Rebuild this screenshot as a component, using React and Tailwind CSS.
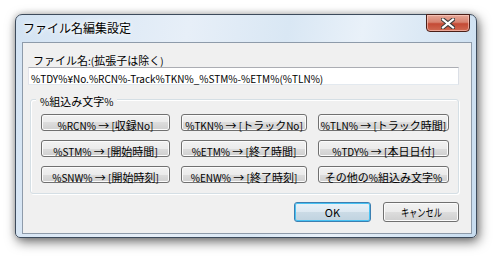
import React from "react";

const rows = [
  ["%RCN% → [収録No]", "%TKN% → [トラックNo]", "%TLN% → [トラック時間]"],
  ["%STM% → [開始時間]", "%ETM% → [終了時間]", "%TDY% → [本日日付]"],
  ["%SNW% → [開始時刻]", "%ENW% → [終了時刻]", "その他の%組込み文字%"],
];
const widths = ["w-[129px]", "w-[126px]", "w-[131px]"];

function T({ children }) {
  const parts = String(children).split(/([\x20-\x7E¥]+)/).filter((p) => p.length);
  return (
    <span className="whitespace-pre">
      {parts.map((p, i) =>
        /^[\x20-\x7E¥]+$/.test(p) ? (
          <span key={i} className="text-[10px]">
            {p}
          </span>
        ) : (
          <span key={i} className="text-[11px]">
            {p}
          </span>
        )
      )}
    </span>
  );
}

function Btn({ children, className = "" }) {
  return (
    <div
      className={
        "flex items-center justify-center rounded-[3px] border border-[#707070] bg-[linear-gradient(to_bottom,#f2f2f2_0%,#ebebeb_50%,#dddddd_50%,#cfcfcf_100%)] shadow-[inset_0_0_0_1px_#fbfbfb] leading-none text-black whitespace-nowrap " +
        className
      }
    >
      {children}
    </div>
  );
}

export default function App() {
  return (
    <div className="w-[495px] h-[257px] bg-white pt-[14px] pl-[15px] font-['Noto_Sans_CJK_JP',sans-serif] overflow-hidden">
      <div className="w-[462px] h-[224px] rounded-t-[7px] rounded-b-[5px] border border-[#3d4b5c] bg-[linear-gradient(100deg,#d3e3f3_0%,#e7eff8_35%,#d9e7f4_55%,#e9f1f9_70%,#c7dcef_100%)] shadow-[2px_4px_12px_rgba(0,0,0,0.55),0_0_6px_rgba(0,0,0,0.2)] flex flex-col">
        <div className="h-[27px] flex items-start justify-between pl-[7px] pr-[6px]">
          <div className="pt-[6px] text-[12px] leading-[14px] text-black [text-shadow:0_0_4px_#ffffff,0_0_6px_#ffffff]">
            ファイル名編集設定
          </div>
          <div className="w-[44px] h-[18px] -mt-px rounded-b-[4px] border border-[#4a1f18] bg-[linear-gradient(to_bottom,#e7a898_0%,#d7826f_45%,#c44a35_55%,#d06a52_100%)] shadow-[inset_0_0_0_1px_rgba(255,210,200,0.6)] flex items-center justify-center">
            <svg width="14" height="11" viewBox="0 0 14 11">
              <path d="M2 1.5 L12 9.5 M12 1.5 L2 9.5" stroke="#3a3a3a" strokeWidth="4.2" strokeLinecap="square" />
              <path d="M2 1.5 L12 9.5 M12 1.5 L2 9.5" stroke="#ffffff" strokeWidth="2.2" strokeLinecap="square" />
            </svg>
          </div>
        </div>
        <div className="ml-[6px] mr-[4px] h-[192px] border border-[#8e9baa] bg-[#f0f0f0] flex flex-col">
          <div className="pl-[10px] pt-[8px] h-[24px] leading-[14px] text-black whitespace-nowrap">
            <T>ファイル名:(拡張子は除く)</T>
          </div>
          <div className="ml-[5px] w-[431px] h-[18px] border border-[#abadb3] border-l-[#e2e3ea] border-r-[#dbdfe6] border-b-[#e3e9ef] bg-white flex items-center pl-[2px] leading-none text-black whitespace-nowrap">
            <T>%TDY%¥No.%RCN%-Track%TKN%_%STM%-%ETM%(%TLN%)</T>
          </div>
          <div className="relative mt-[14px] ml-[7px] w-[429px] h-[95px] rounded-[3px] border border-[#d5dfe5] shadow-[inset_1px_1px_0_#ffffff,1px_1px_0_#ffffff] pl-[10px] pt-[14px]">
            <div className="absolute left-[5px] -top-[8px] px-[4px] bg-[#f0f0f0] leading-[14px] text-black whitespace-nowrap">
              <T>%組込み文字%</T>
            </div>
            <div className="flex flex-col gap-[9px]">
              {rows.map((r, i) => (
                <div key={i} className="flex gap-[11px]">
                  {r.map((t, j) => (
                    <Btn key={j} className={widths[j] + " h-[17px]"}>
                      <T>{t}</T>
                    </Btn>
                  ))}
                </div>
              ))}
            </div>
          </div>
          <div className="mt-[8px] flex justify-end gap-[12px] pr-[12px]">
            <div className="w-[77px] h-[20px] rounded-[3px] border border-[#3c7fb1] bg-[linear-gradient(to_bottom,#eaf2f8_0%,#dce8f1_50%,#cbdbe6_50%,#c0d3e0_100%)] shadow-[inset_0_0_0_1px_#48c2f3] flex items-center justify-center text-[11px] leading-none text-black">
              OK
            </div>
            <Btn className="w-[76px] h-[20px]">
              <span className="inline-block text-[11px] scale-x-[0.75]">キャンセル</span>
            </Btn>
          </div>
        </div>
      </div>
    </div>
  );
}
